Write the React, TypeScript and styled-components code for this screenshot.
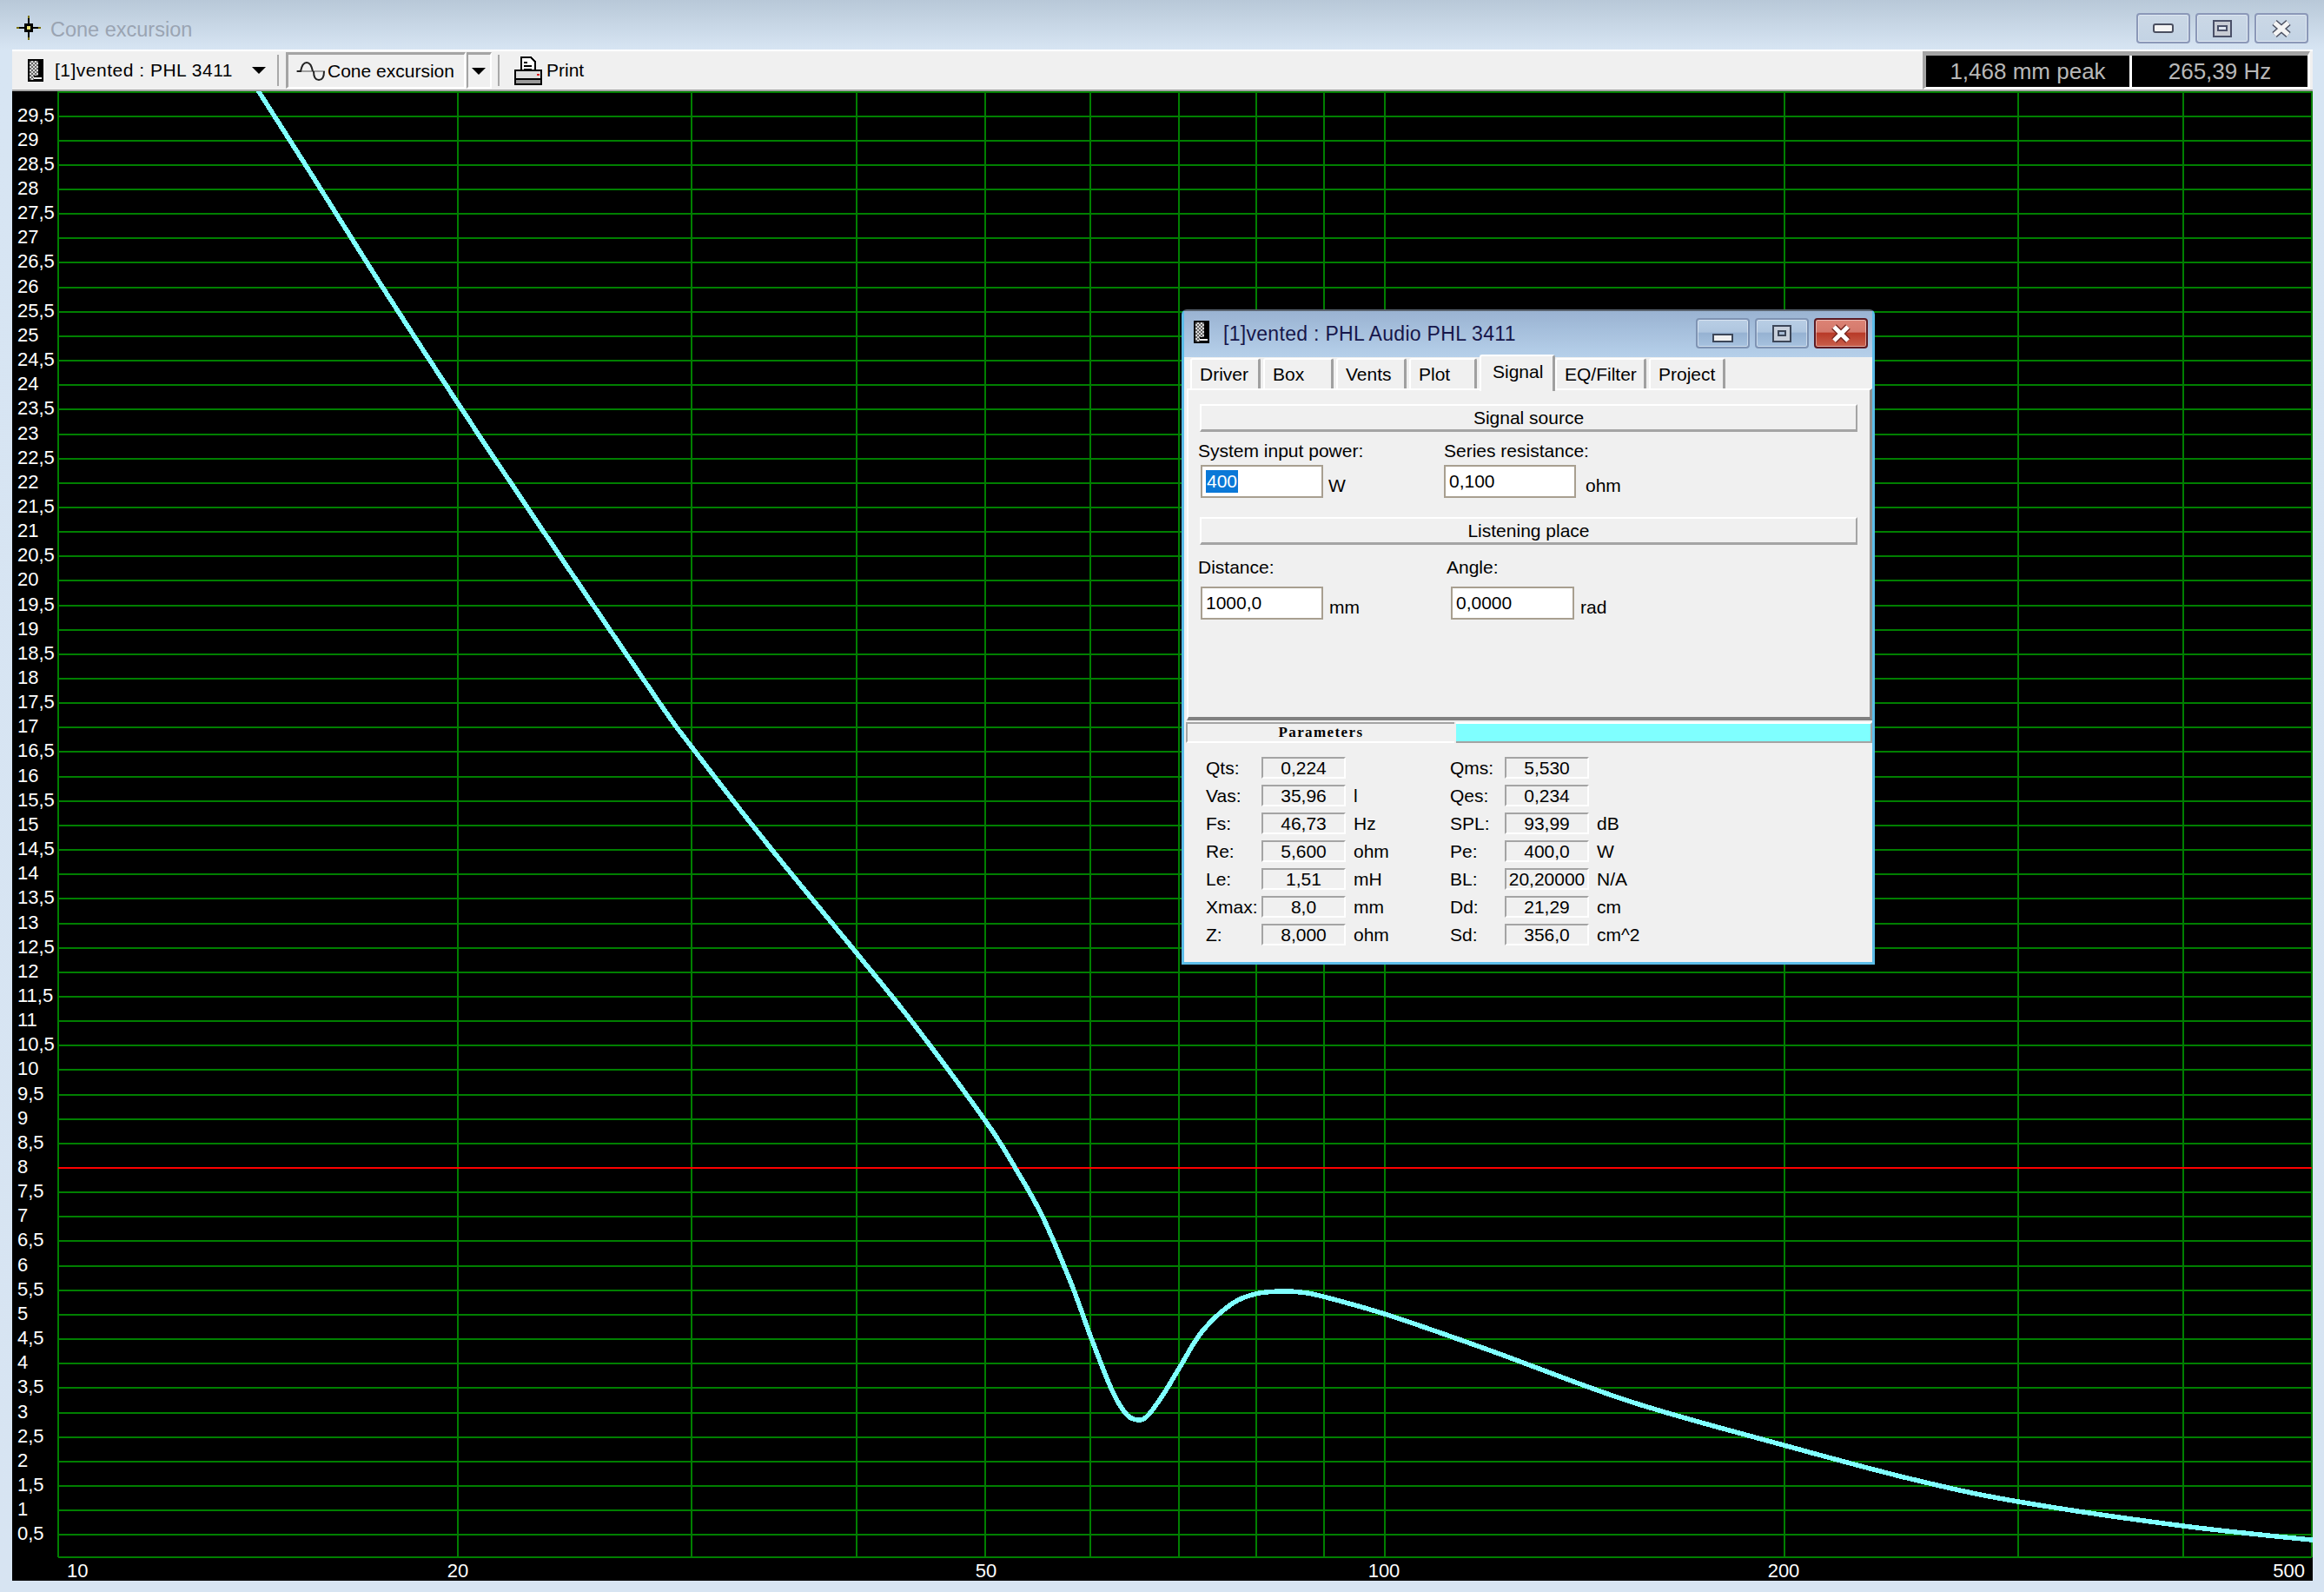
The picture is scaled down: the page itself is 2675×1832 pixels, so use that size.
import { Fragment } from 'react';
import styled, { createGlobalStyle } from 'styled-components';

const GlobalStyle = createGlobalStyle`
	html, body {
		margin: 0;
		padding: 0;
		background: #d7e4f2;
	}
	* {
		box-sizing: border-box;
	}
`;

const UI_FONT = `'Liberation Sans', Arial, sans-serif`;

const Frame = styled.div`
	position: relative;
	width: 2675px;
	height: 1832px;
	overflow: hidden;
	display: flex;
	flex-direction: column;
	padding: 0 13px 13px 14px;
	background: linear-gradient(180deg, #b8c8d8 0, #d7e5f3 57px, #d7e4f2 100%);
	font-family: ${UI_FONT};
	font-size: 21px;
	color: #000;
`;

const TitleBar = styled.div`
	height: 57px;
	flex: none;
	display: flex;
	align-items: flex-start;
	margin-right: 5px;
`;

const TitleIcon = styled.svg`
	width: 28px;
	height: 28px;
	margin: 18px 0 0 5px;
	flex: none;
`;

const TitleText = styled.span`
	margin: 20px 0 0 11px;
	font-size: 23.5px;
	line-height: 28px;
	color: #9aa4b2;
`;

const CaptionButtons = styled.div`
	display: flex;
	gap: 6px;
	margin: 15px 0 0 auto;
`;

const MainCaptionButton = styled.div`
	width: 62px;
	height: 35px;
	display: flex;
	align-items: center;
	justify-content: center;
	border: 2px solid #8b98b8;
	border-radius: 4px;
	background: linear-gradient(180deg, #cbd8e6, #c3d3e4);
	box-shadow: inset 0 0 0 1px #dfe8f2;
`;

const Toolbar = styled.div`
	height: 48px;
	flex: none;
	display: flex;
	align-items: center;
	padding: 0 3px 0 18px;
	background: #f0f0f0;
	border-top: 2px solid #fff;
	border-bottom: 2px solid #a4a4a4;
`;

const DocIcon = styled.svg`
	width: 18px;
	height: 26px;
	flex: none;
`;

const ToolLabel = styled.span<{ $left: number; $width?: number; $spacing?: number }>`
	margin-left: ${(props) => props.$left}px;
	width: ${(props) => (props.$width ? `${props.$width}px` : 'auto')};
	letter-spacing: ${(props) => props.$spacing ?? 0}px;
	white-space: nowrap;
	line-height: 26px;
`;

const DropArrow = styled.span<{ $left?: number }>`
	width: 0;
	height: 0;
	flex: none;
	margin-left: ${(props) => props.$left ?? 0}px;
	border-left: 8px solid transparent;
	border-right: 8px solid transparent;
	border-top: 8px solid #000;
`;

const ToolSep = styled.span<{ $left: number }>`
	width: 2px;
	height: 36px;
	flex: none;
	margin-left: ${(props) => props.$left}px;
	background: #a8a8a8;
`;

const ToggleButton = styled.div`
	width: 207px;
	height: 42px;
	flex: none;
	margin-left: 8px;
	display: flex;
	align-items: center;
	padding-left: 9px;
	border-top: 3px solid #a4a4a4;
	border-left: 3px solid #a4a4a4;
	border-bottom: 2px solid #fff;
	border-right: 2px solid #fff;
`;

const ToggleDrop = styled(ToggleButton)`
	width: 29px;
	margin-left: 1px;
	padding-left: 4px;
	border-left-width: 2px;
`;

const WaveIcon = styled.svg`
	width: 33px;
	height: 24px;
	flex: none;
`;

const PrinterIcon = styled.svg`
	width: 32px;
	height: 33px;
	flex: none;
	margin-left: 17px;
`;

const StatusGroup = styled.div`
	display: flex;
	gap: 3px;
	height: 44px;
	margin-left: auto;
	background: #fff;
	border-top: 5px solid #a4a4a4;
	border-left: 4px solid #a4a4a4;
	border-bottom: 3px solid #fff;
	border-right: 3px solid #fff;
`;

const StatusPane = styled.div<{ $width: number }>`
	width: ${(props) => props.$width}px;
	display: flex;
	align-items: center;
	justify-content: center;
	background: #000;
	color: #b8b8b8;
	font-size: 26px;
`;

const PlotArea = styled.div`
	height: 1714px;
	flex: none;
	background: #000;
`;

const PlotSvg = styled.svg`
	display: block;
	width: 2648px;
	height: 1714px;
	font-family: ${UI_FONT};
	font-size: 22px;
`;

const SubWindow = styled.div`
	position: absolute;
	left: 1360px;
	top: 356px;
	width: 798px;
	height: 754px;
	display: flex;
	flex-direction: column;
	background: #f0f0f0;
	border: 3px solid #5bbce8;
	border-top: 2px solid #5a6470;
	border-radius: 6px 6px 0 0;
`;

const SubCaption = styled.div`
	height: 53px;
	flex: none;
	display: flex;
	align-items: flex-start;
	padding: 11px 5px 0 11px;
	background: linear-gradient(180deg, #9ab3d2, #b6d0ea);
`;

const SubTitle = styled.span`
	margin-left: 16px;
	font-size: 23px;
	letter-spacing: 0.3px;
	line-height: 30px;
	color: #16164a;
`;

const SubCaptionButtons = styled.div`
	display: flex;
	gap: 6px;
	margin-left: auto;
	margin-top: -3px;
`;

const SubCaptionButton = styled.div<{ $close?: boolean }>`
	width: 62px;
	height: 35px;
	display: flex;
	align-items: center;
	justify-content: center;
	border: 2px solid ${(props) => (props.$close ? '#5c1a22' : '#7e93b3')};
	border-radius: 4px;
	background: ${(props) =>
		props.$close
			? 'linear-gradient(180deg, #dc8375 0, #d4796c 45%, #b83a28 50%, #c9604c 100%)'
			: 'linear-gradient(180deg, #b9cee5 0, #afc6df 45%, #96b2d2 50%, #a7c2df 100%)'};
	box-shadow: inset 0 0 0 1px rgba(255, 255, 255, 0.45);
`;

const MinimizeGlyph = styled.svg`
	margin-top: 10px;
`;

const TabStrip = styled.div`
	height: 36px;
	flex: none;
	display: flex;
	align-items: flex-end;
	padding-left: 7px;
	background: #f0f0f0;
	position: relative;
	z-index: 1;
`;

const Tab = styled.div<{ $width: number; $active?: boolean }>`
	width: ${(props) => props.$width}px;
	height: ${(props) => (props.$active ? 42 : 35)}px;
	margin-right: ${(props) => (props.$active ? 0 : 3)}px;
	margin-bottom: ${(props) => (props.$active ? -3 : 0)}px;
	padding: ${(props) => (props.$active ? '5px 0 0 13px' : '4px 0 0 9px')};
	flex: none;
	line-height: 26px;
	background: #f0f0f0;
	border-top: 2px solid #fff;
	border-left: 2px solid #fff;
	border-right: 3px solid #a0a0a0;
	border-radius: 3px 3px 0 0;
`;

const TabPage = styled.div`
	height: 382px;
	flex: none;
	margin: 0 0 0 3px;
	padding: 16px 14px 0 13px;
	background: #f0f0f0;
	border-top: 2px solid #fff;
	border-left: 2px solid #fff;
	border-right: 3px solid #8f8f8f;
	border-bottom: 4px solid #808080;
`;

const SectionBar = styled.div`
	height: 32px;
	display: flex;
	align-items: center;
	justify-content: center;
	padding-top: 1px;
	border-top: 2px solid #fff;
	border-left: 2px solid #fff;
	border-right: 2px solid #a4a4a4;
	border-bottom: 3px solid #a4a4a4;
`;

const FormRow = styled.div<{ $top: number; $bottom: number }>`
	display: grid;
	grid-template-columns: 283px 1fr;
	margin-top: ${(props) => props.$top}px;
	margin-bottom: ${(props) => props.$bottom}px;
`;

const Field = styled.div<{ $gap: number }>`
	display: flex;
	flex-direction: column;
	gap: ${(props) => props.$gap}px;
`;

const FieldLabel = styled.span<{ $left: number }>`
	margin-left: ${(props) => props.$left}px;
	line-height: 24px;
	white-space: nowrap;
`;

const FieldLine = styled.div<{ $left: number }>`
	display: flex;
	align-items: flex-start;
	margin-left: ${(props) => props.$left}px;
`;

const InputBox = styled.div<{ $width: number }>`
	width: ${(props) => props.$width}px;
	height: 38px;
	flex: none;
	padding-left: 4px;
	display: flex;
	align-items: center;
	background: #fff;
	border: 2px solid #a89f90;
`;

const SelectedText = styled.span`
	padding: 0 1px;
	background: #0a78d7;
	color: #fff;
	line-height: 26px;
`;

const UnitLabel = styled.span<{ $left: number }>`
	margin: 11px 0 0 ${(props) => props.$left}px;
	line-height: 26px;
`;

const ParamTabs = styled.div`
	height: 24px;
	flex: none;
	display: flex;
	margin-top: 2px;
	padding-left: 2px;
`;

const ParamTab = styled.div`
	width: 309px;
	display: flex;
	align-items: center;
	justify-content: center;
	font-family: 'Liberation Serif', serif;
	font-size: 17px;
	font-weight: 700;
	letter-spacing: 1.4px;
	border-top: 2px solid #a4a4a4;
	border-left: 2px solid #a4a4a4;
	border-bottom: 2px solid #fff;
`;

const ParamFill = styled.div`
	flex: 1;
	margin-left: 2px;
	background: #7fffff;
	border-top: 2px solid #fff;
	border-bottom: 2px solid #a4a4a4;
	border-right: 2px solid #a4a4a4;
`;

const ParamGrid = styled.div`
	flex: 1;
	display: grid;
	grid-template-columns: 64px 97px 120px 63px 97px 1fr;
	grid-auto-rows: 32px;
	padding: 16px 0 0 25px;
	line-height: 25px;
`;

const ParamName = styled.span`
	white-space: nowrap;
`;

const ParamValue = styled.span`
	height: 25px;
	text-align: center;
	white-space: nowrap;
	border-top: 2px solid #a4a4a4;
	border-left: 2px solid #a4a4a4;
	border-bottom: 2px solid #fff;
	border-right: 2px solid #fff;
	line-height: 21px;
`;

const ParamUnit = styled.span`
	padding-left: 9px;
	white-space: nowrap;
`;

const VERTICALS = [10, 20, 30, 40, 50, 60, 70, 80, 90, 100, 200, 300, 400, 500];
const X_LABELS: [string, number, 'start' | 'middle' | 'end'][] = [
	['10', 77, 'start'],
	['20', 527, 'middle'],
	['50', 1135, 'middle'],
	['100', 1593, 'middle'],
	['200', 2053, 'middle'],
	['500', 2653, 'end'],
];

const xOf = (f: number) => Math.round(67 + 1527 * Math.log10(f / 10));
const yOf = (v: number) => Math.round(1794.4 - 56.3 * v);

const CURVE: [number, number][] = [
	[290, 93], [297, 104], [360, 203], [440, 330], [527, 464], [613, 593], [753, 800], [795, 858],
	[887, 976], [987, 1098], [1053, 1180], [1135, 1291], [1168, 1343], [1200, 1400], [1233, 1477],
	[1255, 1537], [1280, 1600], [1297, 1628], [1311, 1634], [1322, 1628], [1340, 1603], [1357, 1575],
	[1383, 1533], [1417, 1501], [1445, 1489], [1473, 1486], [1497, 1487], [1523, 1492], [1600, 1514],
	[1715, 1554], [1877, 1613], [2053, 1663], [2200, 1702], [2323, 1728], [2513, 1756], [2670, 1773],
];

// catmull-rom through the points read off the plot
const curvePath = () => {
	let d = `M${CURVE[0][0]} ${CURVE[0][1]}`;
	for (let i = 0; i < CURVE.length - 1; i++) {
		const p0 = CURVE[Math.max(i - 1, 0)];
		const p1 = CURVE[i];
		const p2 = CURVE[i + 1];
		const p3 = CURVE[Math.min(i + 2, CURVE.length - 1)];
		const c1x = p1[0] + (p2[0] - p0[0]) / 6;
		const c1y = p1[1] + (p2[1] - p0[1]) / 6;
		const c2x = p2[0] - (p3[0] - p1[0]) / 6;
		const c2y = p2[1] - (p3[1] - p1[1]) / 6;
		d += ` C${c1x.toFixed(1)} ${c1y.toFixed(1)} ${c2x.toFixed(1)} ${c2y.toFixed(1)} ${p2[0]} ${p2[1]}`;
	}
	return d;
};

const PARAMS = [
	['Qts:', '0,224', '', 'Qms:', '5,530', ''],
	['Vas:', '35,96', 'l', 'Qes:', '0,234', ''],
	['Fs:', '46,73', 'Hz', 'SPL:', '93,99', 'dB'],
	['Re:', '5,600', 'ohm', 'Pe:', '400,0', 'W'],
	['Le:', '1,51', 'mH', 'BL:', '20,20000', 'N/A'],
	['Xmax:', '8,0', 'mm', 'Dd:', '21,29', 'cm'],
	['Z:', '8,000', 'ohm', 'Sd:', '356,0', 'cm^2'],
];

const TABS = [
	{ name: 'Driver', width: 81 },
	{ name: 'Box', width: 81 },
	{ name: 'Vents', width: 81 },
	{ name: 'Plot', width: 78 },
	{ name: 'Signal', width: 87, active: true },
	{ name: 'EQ/Filter', width: 105 },
	{ name: 'Project', width: 88 },
];

const SpeakerGlyph = () => (
	<DocIcon viewBox="0 0 18 26" shapeRendering="crispEdges">
		<defs>
			<pattern id="dither" width="4" height="4" patternUnits="userSpaceOnUse">
				<rect width="4" height="4" fill="#d8d8d8" />
				<rect width="2" height="2" fill="#666" />
				<rect x="2" y="2" width="2" height="2" fill="#666" />
			</pattern>
		</defs>
		<rect width="18" height="26" fill="#000" />
		<rect x="2" y="2" width="10" height="17" fill="url(#dither)" />
		<rect x="2" y="19" width="5" height="5" fill="url(#dither)" />
		<rect x="7" y="21" width="9" height="2" fill="#f0f0f0" />
	</DocIcon>
);

const App = () => {
	return (
		<Frame>
			<GlobalStyle />
			<TitleBar>
				<TitleIcon viewBox="0 0 28 28" shapeRendering="crispEdges">
					<path d="M1 13h26v2H1zM13 1h2v26h-2z" fill="#000" />
					<rect x="9" y="9" width="10" height="10" fill="#000" />
					<rect x="12" y="12" width="4" height="4" fill="#e8e070" />
					<path d="M13 0h2v3h-2zM13 25h2v3h-2zM0 13h3v2H0zM25 13h3v2h-3z" fill="#7a7000" />
				</TitleIcon>
				<TitleText>Cone excursion</TitleText>
				<CaptionButtons>
					<MainCaptionButton>
						<svg width="24" height="11" viewBox="0 0 24 11">
							<rect x="1" y="1" width="22" height="9" rx="2" fill="#f4f4f4" stroke="#4a4f60" strokeWidth="2" />
						</svg>
					</MainCaptionButton>
					<MainCaptionButton>
						<svg width="22" height="20" viewBox="0 0 22 20">
							<rect x="1" y="1" width="20" height="18" fill="#c8ccd4" stroke="#4a5068" strokeWidth="2" />
							<rect x="6" y="7" width="10" height="5" fill="#dfe6f0" stroke="#4a5068" strokeWidth="2" />
						</svg>
					</MainCaptionButton>
					<MainCaptionButton>
						<svg width="24" height="20" viewBox="0 0 24 20">
							<path d="M4 3l16 14M20 3L4 17" stroke="#4a4f60" strokeWidth="8" />
							<path d="M4 3l16 14M20 3L4 17" stroke="#f4f4f4" strokeWidth="5" />
						</svg>
					</MainCaptionButton>
				</CaptionButtons>
			</TitleBar>

			<Toolbar>
				<SpeakerGlyph />
				<ToolLabel $left={13} $width={201} $spacing={0.5}>[1]vented : PHL 3411</ToolLabel>
				<DropArrow $left={26} />
				<ToolSep $left={13} />
				<ToggleButton>
					<WaveIcon viewBox="0 0 33 24">
						<path d="M0 12h33" stroke="#a0a0a0" strokeWidth="2" />
						<path d="M1 12h4c1-5 3-10 7-10s6 5 7 10M20 12c0 6 2 10 6 10s6-4 6-10" fill="none" stroke="#222" strokeWidth="2" />
					</WaveIcon>
					<ToolLabel $left={3}>Cone excursion</ToolLabel>
				</ToggleButton>
				<ToggleDrop>
					<DropArrow />
				</ToggleDrop>
				<ToolSep $left={7} />
				<PrinterIcon viewBox="0 0 32 33" shapeRendering="crispEdges">
					<path d="M8 1h11l5 5v11H8z" fill="#fff" stroke="#000" strokeWidth="2" />
					<path d="M11 6h4v2h-4zM11 10h9v2h-9zM11 14h9v2h-9z" fill="#000" />
					<rect x="1" y="16" width="30" height="10" fill="#ddd" stroke="#000" strokeWidth="2" />
					<rect x="26" y="20" width="3" height="2" fill="#e02020" />
					<rect x="1" y="26" width="30" height="6" fill="#999" stroke="#000" strokeWidth="2" />
				</PrinterIcon>
				<ToolLabel $left={5}>Print</ToolLabel>
				<StatusGroup>
					<StatusPane $width={234}>1,468 mm peak</StatusPane>
					<StatusPane $width={202}>265,39 Hz</StatusPane>
				</StatusGroup>
			</Toolbar>

			<PlotArea>
				<PlotSvg viewBox="14 105 2648 1714">
					<defs>
						<clipPath id="plot-clip">
							<rect x="67" y="105" width="2595" height="1687" />
						</clipPath>
					</defs>
					<g stroke="#007f00" strokeWidth="2" shapeRendering="crispEdges">
						{Array.from({ length: 59 }, (_, i) => (i + 1) / 2)
							.filter((v) => v !== 8)
							.map((v) => (
								<line key={v} x1="67" x2="2661" y1={yOf(v)} y2={yOf(v)} />
							))}
						<line x1="67" x2="2661" y1="106" y2="106" />
						<line x1="67" x2="2661" y1="1792" y2="1792" />
						{VERTICALS.map((f) => (
							<line key={f} x1={xOf(f)} x2={xOf(f)} y1="105" y2="1792" />
						))}
						<line x1="2661" x2="2661" y1="105" y2="1792" />
					</g>
					<line x1="67" x2="2661" y1={yOf(8)} y2={yOf(8)} stroke="#ff0000" strokeWidth="2" shapeRendering="crispEdges" />
					<path
						d={curvePath()}
						fill="none"
						stroke="#7fffff"
						strokeWidth="5.5"
						shapeRendering="crispEdges"
						clipPath="url(#plot-clip)"
					/>
					<g fill="#fff">
						{Array.from({ length: 59 }, (_, i) => (i + 1) / 2).map((v) => (
							<text key={v} x="20" y={yOf(v) + 6}>
								{String(v).replace('.', ',')}
							</text>
						))}
						{X_LABELS.map(([label, x, anchor]) => (
							<text key={label} x={x} y="1815" textAnchor={anchor}>
								{label}
							</text>
						))}
					</g>
				</PlotSvg>
			</PlotArea>

			<SubWindow>
				<SubCaption>
					<SpeakerGlyph />
					<SubTitle>[1]vented : PHL Audio PHL 3411</SubTitle>
					<SubCaptionButtons>
						<SubCaptionButton>
							<MinimizeGlyph width="24" height="10" viewBox="0 0 24 10">
								<rect x="1" y="1" width="22" height="8" fill="#f0f0f0" stroke="#3c4658" strokeWidth="2" />
							</MinimizeGlyph>
						</SubCaptionButton>
						<SubCaptionButton>
							<svg width="22" height="20" viewBox="0 0 22 20">
								<rect x="1" y="1" width="20" height="18" fill="#c8d0dc" stroke="#3c4658" strokeWidth="2" />
								<rect x="7" y="7" width="8" height="5" fill="#a8bcd6" stroke="#3c4658" strokeWidth="2" />
							</svg>
						</SubCaptionButton>
						<SubCaptionButton $close>
							<svg width="26" height="22" viewBox="0 0 26 22">
								<path d="M5 3l16 16M21 3L5 19" stroke="#7a2a22" strokeWidth="8" />
								<path d="M5 3l16 16M21 3L5 19" stroke="#fff" strokeWidth="5" />
							</svg>
						</SubCaptionButton>
					</SubCaptionButtons>
				</SubCaption>

				<TabStrip>
					{TABS.map((tab) => (
						<Tab key={tab.name} $width={tab.width} $active={tab.active}>
							{tab.name}
						</Tab>
					))}
				</TabStrip>

				<TabPage>
					<SectionBar>Signal source</SectionBar>
					<FormRow $top={10} $bottom={22}>
						<Field $gap={4}>
							<FieldLabel $left={-2}>System input power:</FieldLabel>
							<FieldLine $left={1}>
								<InputBox $width={141}>
									<SelectedText>400</SelectedText>
								</InputBox>
								<UnitLabel $left={6}>W</UnitLabel>
							</FieldLine>
						</Field>
						<Field $gap={4}>
							<FieldLabel $left={-2}>Series resistance:</FieldLabel>
							<FieldLine $left={-2}>
								<InputBox $width={152}>0,100</InputBox>
								<UnitLabel $left={11}>ohm</UnitLabel>
							</FieldLine>
						</Field>
					</FormRow>
					<SectionBar>Listening place</SectionBar>
					<FormRow $top={14} $bottom={0}>
						<Field $gap={10}>
							<FieldLabel $left={-2}>Distance:</FieldLabel>
							<FieldLine $left={1}>
								<InputBox $width={141}>1000,0</InputBox>
								<UnitLabel $left={7}>mm</UnitLabel>
							</FieldLine>
						</Field>
						<Field $gap={10}>
							<FieldLabel $left={1}>Angle:</FieldLabel>
							<FieldLine $left={6}>
								<InputBox $width={142}>0,0000</InputBox>
								<UnitLabel $left={7}>rad</UnitLabel>
							</FieldLine>
						</Field>
					</FormRow>
				</TabPage>

				<ParamTabs>
					<ParamTab>Parameters</ParamTab>
					<ParamFill />
				</ParamTabs>

				<ParamGrid>
					{PARAMS.map((row) => (
						<Fragment key={row[0]}>
							<ParamName>{row[0]}</ParamName>
							<ParamValue>{row[1]}</ParamValue>
							<ParamUnit>{row[2]}</ParamUnit>
							<ParamName>{row[3]}</ParamName>
							<ParamValue>{row[4]}</ParamValue>
							<ParamUnit>{row[5]}</ParamUnit>
						</Fragment>
					))}
				</ParamGrid>
			</SubWindow>
		</Frame>
	);
};

export default App;
